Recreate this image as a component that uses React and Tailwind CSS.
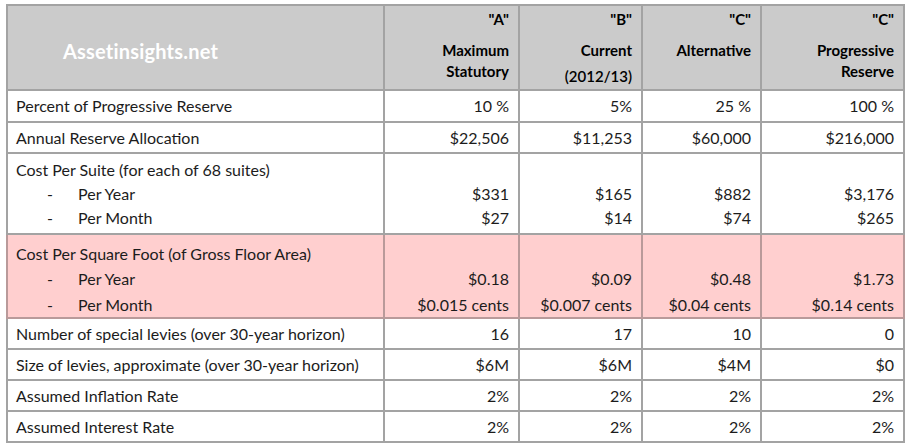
const cols = ['w-[377px]', 'w-[135px]', 'w-[123px]', 'w-[119px]', 'w-[143px]'];

const simpleRows = [
  ['Percent of Progressive Reserve', '10 %', '5%', '25 %', '100 %'],
  ['Annual Reserve Allocation', '$22,506', '$11,253', '$60,000', '$216,000'],
];

const bottomRows = [
  ['Number of special levies (over 30-year horizon)', '16', '17', '10', '0'],
  ['Size of levies, approximate (over 30-year horizon)', '$6M', '$6M', '$4M', '$0'],
  ['Assumed Inflation Rate', '2%', '2%', '2%', '2%'],
  ['Assumed Interest Rate', '2%', '2%', '2%', '2%'],
];

const suite = {
  title: 'Cost Per Suite (for each of 68 suites)',
  year: ['$331', '$165', '$882', '$3,176'],
  month: ['$27', '$14', '$74', '$265'],
};

const sqft = {
  title: 'Cost Per Square Foot (of Gross Floor Area)',
  year: ['$0.18', '$0.09', '$0.48', '$1.73'],
  month: ['$0.015 cents', '$0.007 cents', '$0.04 cents', '$0.14 cents'],
};

const cell = 'border-2 border-[#a3a3a3] px-[8px]';

function SimpleRow({row, height = 'h-[31px]'}) {
  return (
    <tr className={height}>
      <td className={`${cell} align-middle`}>{row[0]}</td>
      {row.slice(1).map((v, i) => (
        <td key={i} className={`${cell} text-right align-middle pr-[9px]`}>{v}</td>
      ))}
    </tr>
  );
}

function SubRow({data, pink}) {
  const border = pink ? 'border-2 border-[#b99a9a] px-[8px]' : cell;
  return (
    <tr className={pink ? 'h-[83px] bg-[#ffcfcf]' : 'h-[81px]'}>
      <td className={`${border} align-top ${pink ? 'pt-[7px]' : 'pt-[4px]'}`}>
        <div className="leading-[24px]">{data.title}</div>
        <div className={`flex leading-[24px] ${pink ? 'mt-[1px]' : ''}`}>
          <span className="w-[30px] pl-[31px] box-content">-</span>
          <span className="ml-[1px]">Per Year</span>
        </div>
        <div className={`flex leading-[24px] ${pink ? 'mt-[2px]' : ''}`}>
          <span className="w-[30px] pl-[31px] box-content">-</span>
          <span className="ml-[1px]">Per Month</span>
        </div>
      </td>
      {data.year.map((v, i) => (
        <td key={i} className={`${border} text-right align-top pr-[9px] ${pink ? 'pt-[7px]' : 'pt-[4px]'}`}>
          <div className="leading-[24px]">&nbsp;</div>
          <div className={`leading-[24px] ${pink ? 'mt-[1px]' : ''}`}>{v}</div>
          <div className={`leading-[24px] ${pink ? 'mt-[2px]' : ''}`}>{data.month[i]}</div>
        </td>
      ))}
    </tr>
  );
}

export default function App() {
  return (
    <div className="bg-white w-[909px] h-[446px] pt-[4px] pl-[6px] text-[16px] text-[#1c1c1c]" style={{fontFamily: 'Lato, "Open Sans", sans-serif'}}>
      <table className="border-collapse border-2 border-[#9c9c9c] table-fixed w-[899px]">
        <colgroup>
          {cols.map((c, i) => <col key={i} className={c}/>)}
        </colgroup>
        <thead>
          <tr className="h-[85px] bg-[#cbcbcb] font-bold text-black text-[15px]">
            <th className={`${cell} text-left align-middle pl-[55px] pt-[6px]`}>
              <span className="text-white text-[20px] tracking-[0.2px]">Assetinsights.net</span>
            </th>
            <th className={`${cell} text-right align-top pr-[9px] pt-[3px] font-bold leading-[21px]`}>
              <div>"A"</div>
              <div className="mt-[10px]">Maximum</div>
              <div>Statutory</div>
            </th>
            <th className={`${cell} text-right align-top pr-[9px] pt-[3px] font-bold leading-[21px]`}>
              <div>"B"</div>
              <div className="mt-[10px]">Current</div>
              <div className="mt-[5px] font-semibold">(2012/13)</div>
            </th>
            <th className={`${cell} text-right align-top pr-[9px] pt-[3px] font-bold leading-[21px]`}>
              <div>"C"</div>
              <div className="mt-[10px]">Alternative</div>
            </th>
            <th className={`${cell} text-right align-top pr-[9px] pt-[3px] font-bold leading-[21px]`}>
              <div>"C"</div>
              <div className="mt-[10px]">Progressive</div>
              <div>Reserve</div>
            </th>
          </tr>
        </thead>
        <tbody>
          <SimpleRow row={simpleRows[0]} height="h-[32px]"/>
          <SimpleRow row={simpleRows[1]}/>
          <SubRow data={suite}/>
          <SubRow data={sqft} pink/>
          {bottomRows.map((r, i) => <SimpleRow key={i} row={r}/>)}
        </tbody>
      </table>
    </div>
  );
}
